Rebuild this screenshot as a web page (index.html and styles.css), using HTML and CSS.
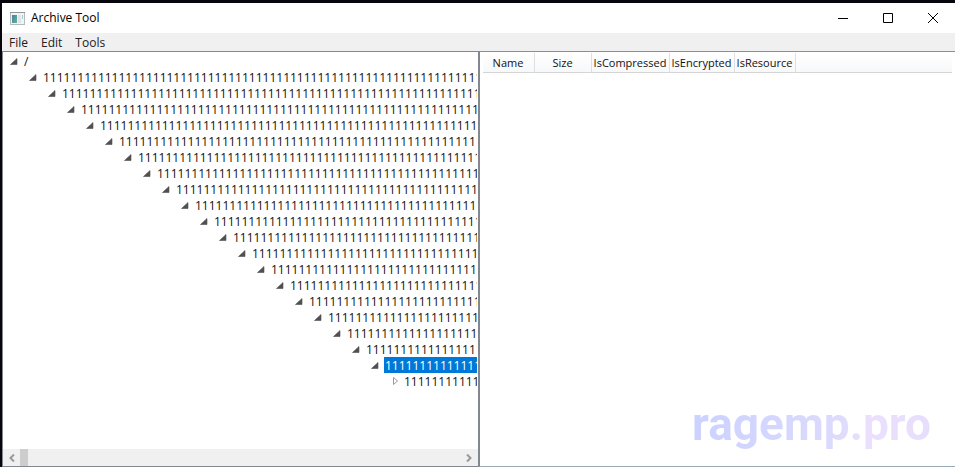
FILE: index.html
```html
<!DOCTYPE html>
<html lang="en">
<head>
  <meta charset="UTF-8" />
  <meta name="viewport" content="width=device-width, initial-scale=1.0"/>
  <title>Archive Tool</title>
  <link rel="stylesheet" href="styles.css">
</head>
<body>
  <div class="window">
    <header class="titlebar">
      <svg class="app-icon" width="15" height="13" viewBox="0 0 15 13" aria-hidden="true">
        <defs>
          <linearGradient id="pane" x1="0" y1="0" x2="1" y2="1">
            <stop offset="0" stop-color="#4a7fa6"/>
            <stop offset="1" stop-color="#62b490"/>
          </linearGradient>
        </defs>
        <rect x="0.5" y="0.5" width="14" height="12" fill="#f1f3f4" stroke="#b4babd"/>
        <path d="M0 .5h15" stroke="#8e979c"/>
        <rect x="2" y="3" width="5" height="8" fill="url(#pane)"/>
        <rect x="8" y="3" width="3" height="8" fill="#dce6ea"/>
        <rect x="12" y="3" width="1" height="4" fill="#a9d0c6"/>
      </svg>
      <h1>Archive Tool</h1>
      <div class="window-buttons">
        <button type="button" aria-label="Minimize">
          <svg width="10" height="10" viewBox="0 0 10 10"><path d="M0 5.5h10"/></svg>
        </button>
        <button type="button" aria-label="Maximize">
          <svg width="10" height="10" viewBox="0 0 10 10"><path d="M.5 .5h9v9h-9z"/></svg>
        </button>
        <button type="button" aria-label="Close">
          <svg width="10" height="10" viewBox="0 0 10 10"><path d="M0 0l10 10M10 0L0 10"/></svg>
        </button>
      </div>
    </header>

    <nav class="menu">
      <button type="button">File</button>
      <button type="button">Edit</button>
      <button type="button">Tools</button>
    </nav>

    <main class="panels">
      <section class="tree-panel">
        <ul class="tree" id="tree"></ul>
        <div class="scrollbar">
          <button type="button" aria-label="Scroll left">
            <svg width="6" height="8" viewBox="0 0 6 8"><path d="M5 .5L1.500 4L5 7.500"/></svg>
          </button>
          <div class="track"><div class="thumb"></div></div>
          <button type="button" aria-label="Scroll right">
            <svg width="6" height="8" viewBox="0 0 6 8"><path d="M1 .5L4.500 4L1 7.500"/></svg>
          </button>
        </div>
      </section>

      <section class="list-panel">
        <table class="files">
          <thead>
            <tr>
              <th class="col-name">Name</th>
              <th class="col-size">Size</th>
              <th class="col-compressed">IsCompressed</th>
              <th class="col-encrypted">IsEncrypted</th>
              <th class="col-resource">IsResource</th>
              <td class="col-rest"></td>
            </tr>
          </thead>
        </table>
        <div class="watermark">ragemp.pro</div>
      </section>
    </main>
  </div>

  <script src="tree.js"></script>
</body>
</html>
```
FILE: tree.js
```js
// Number of characters in each folder name, from the top folder down
const nameLengths = [67, 64, 62, 59, 56, 53, 50, 47, 44, 41, 38, 35, 32, 29, 26, 24, 21, 18, 15, 12];
const selectedDepth = 19;

const openArrow = '<svg width="8" height="7" viewBox="0 0 8 7"><path class="open" d="M7 .5v6h-6.500z"/></svg>';
const closedArrow = '<svg width="5" height="8" viewBox="0 0 5 8"><path class="closed" d="M.5 .5v7L4.500 4z"/></svg>';

function addFolder(list, name, depth) {
  const isLast = depth === nameLengths.length;
  const item = document.createElement('li');
  item.innerHTML = `
    <div class="row">
      <button type="button" class="toggle" aria-expanded="${!isLast}" aria-label="Toggle folder">${isLast ? closedArrow : openArrow}</button>
      <span class="name${depth === selectedDepth ? ' selected' : ''}">${name}</span>
    </div>`;
  list.appendChild(item);

  if (!isLast) {
    const children = document.createElement('ul');
    item.appendChild(children);
    addFolder(children, '1'.repeat(nameLengths[depth]), depth + 1);
  }
}

addFolder(document.getElementById('tree'), '/', 0);
```
FILE: styles.css
```css
* { box-sizing: border-box; }

body {
  margin: 0;
  font-family: "Open Sans", "Noto Sans", sans-serif;
  font-size: 12px;
  line-height: 18px;
  color: #111;
  background: #07060d;
}

button {
  padding: 0;
  border: none;
  background: none;
  font: inherit;
  color: inherit;
}

.window {
  display: flex;
  flex-direction: column;
  height: 100vh;
  padding: 3px 0 0 2px;
}

/* title bar */
.titlebar {
  display: flex;
  align-items: center;
  height: 30px;
  padding-left: 8px;
  background: #fff;
}

.titlebar h1 {
  margin: 0 0 0 6px;
  font-size: 12px;
  font-weight: normal;
  color: #000;
}

.window-buttons {
  display: flex;
  height: 100%;
  margin-left: auto;
}

.window-buttons button {
  display: flex;
  align-items: center;
  justify-content: center;
  width: 45px;
}

.window-buttons path {
  fill: none;
  stroke: #000;
}

/* menu */
.menu {
  display: flex;
  align-items: center;
  gap: 13px;
  height: 18px;
  padding: 2px 7px 0;
  background: #f0f0f0;
  color: #212121;
}

/* panels */
.panels {
  display: grid;
  grid-template-columns: 1fr 1fr;
  flex: 1;
  min-height: 0;
}

.tree-panel {
  display: flex;
  flex-direction: column;
  min-width: 0;
  border: 1px solid #828790;
  background: #fff;
}

.tree,
.tree ul {
  margin: 0;
  padding: 0;
  list-style: none;
}

.tree {
  flex: 1;
  min-height: 0;
  padding: 1px 1px 0 1px;
  overflow: hidden;
}

.tree ul {
  padding-left: 19px;
}

.row {
  display: flex;
  height: 16px;
}

.toggle {
  display: flex;
  flex: none;
  align-items: center;
  width: 19px;
  padding-left: 6px;
}

.toggle[aria-expanded="false"] {
  padding-left: 9px;
}

.toggle .open {
  fill: #505050;
  stroke: #505050;
  stroke-width: .6;
}

.toggle .closed {
  fill: #fff;
  stroke: #989898;
}

.name {
  padding: 0 1px;
  overflow: hidden;
  white-space: nowrap;
}

.name.selected {
  background: #0078d7;
  color: #fff;
}

.scrollbar {
  display: flex;
  height: 17px;
  background: #f0f0f0;
}

.scrollbar button {
  display: flex;
  align-items: center;
  justify-content: center;
  width: 17px;
}

.scrollbar path {
  fill: none;
  stroke: #999;
  stroke-width: 2;
}

.track {
  flex: 1;
}

.thumb {
  width: 8px;
  height: 100%;
  background: #cdcdcd;
}

.list-panel {
  position: relative;
  min-width: 0;
  padding: 1px 3px;
  border: solid #828790;
  border-width: 1px 0 1px 1px;
  border-top-color: #7e92a5;
  border-bottom-color: #9aabba;
  background: #fff;
}

.files {
  width: 100%;
  table-layout: fixed;
  border-collapse: separate;
  border-spacing: 0;
}

.files th,
.files td {
  height: 20px;
  padding: 1px 0 0;
  border-right: 1px solid #dfdfdf;
  border-bottom: 1px solid #d5d5d5;
  background: linear-gradient(#fff, #f7f8fa);
  font-size: 11px;
  font-weight: normal;
  white-space: nowrap;
}

.files .col-rest { border-right: none; }
.col-name { width: 52px; }
.col-size { width: 57px; }
.col-compressed { width: 78px; }
.col-encrypted { width: 65px; }
.col-resource { width: 61px; }

.watermark {
  position: absolute;
  right: 24px;
  bottom: 16px;
  font-family: Roboto, sans-serif;
  font-size: 46px;
  font-weight: bold;
  line-height: 52px;
  color: transparent;
  background: linear-gradient(90deg, #cbd2ff, #dcdafd 60%, #ebe0fc 75%, #e6defc);
  -webkit-background-clip: text;
  background-clip: text;
}
```
